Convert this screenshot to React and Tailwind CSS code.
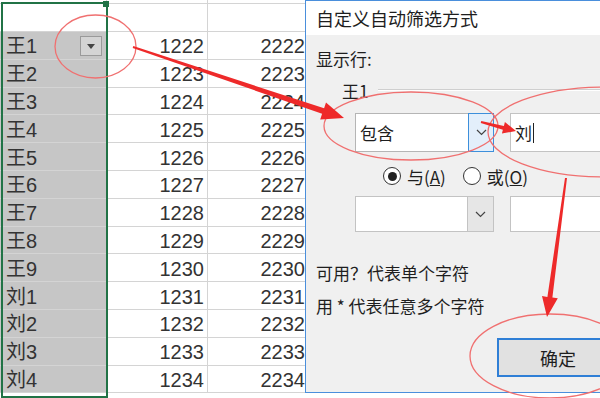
import React from 'react';

const rows = [
  ['', '', ''],
  ['王1', '1222', '2222'],
  ['王2', '1223', '2223'],
  ['王3', '1224', '2224'],
  ['王4', '1225', '2225'],
  ['王5', '1226', '2226'],
  ['王6', '1227', '2227'],
  ['王7', '1228', '2228'],
  ['王8', '1229', '2229'],
  ['王9', '1230', '2230'],
  ['刘1', '1231', '2231'],
  ['刘2', '1232', '2232'],
  ['刘3', '1233', '2233'],
  ['刘4', '1234', '2234'],
];

const Chevron = () => (
  <svg width="11" height="7" viewBox="0 0 11 7">
    <path d="M1 1 L5.5 5.5 L10 1" fill="none" stroke="#444" strokeWidth="1.2" />
  </svg>
);

const Radio = ({ checked }) => (
  <span className="w-[18px] h-[18px] rounded-full border border-[#333] bg-white flex items-center justify-center">
    {checked && <span className="w-[9px] h-[9px] rounded-full bg-[#222]" />}
  </span>
);

const Sheet = () => (
  <div className="flex flex-col w-[600px]" style={{ fontFamily: '"Liberation Sans", "Noto Sans CJK SC", sans-serif' }}>
    <div className="h-[4px] border-b border-[#d4d4d4] flex">
      <div className="w-[107px] border-r border-[#d4d4d4]" />
      <div className="w-[101px] border-r border-[#d4d4d4]" />
    </div>
    {rows.map((r, i) => (
      <div key={i} className={`flex border-b border-[#d4d4d4] text-[20px] text-[#333] ${i === 0 ? 'h-[28px]' : 'h-[27.8px]'}`}>
        <div className={`w-[107px] flex items-center pl-[6px] pt-[2px] border-r border-[#d4d4d4] ${i === 0 ? 'bg-white' : 'bg-[#c6c6c6]'}`}>
          <span className="leading-none">{r[0]}</span>
          {i === 1 && (
            <span className="ml-auto mr-[4px] w-[22px] h-[20px] border border-[#9a9a9a] bg-[#d4d4d4] flex items-center justify-center">
              <svg width="8" height="5" viewBox="0 0 8 5"><path d="M0 0 L8 0 L4 5 Z" fill="#444" /></svg>
            </span>
          )}
        </div>
        <div className="w-[101px] flex items-center justify-end pr-[3px] pt-[2px] border-r border-[#d4d4d4] leading-none">{r[1]}</div>
        <div className="w-[100px] flex items-center justify-end pr-[3px] pt-[2px] leading-none">{r[2]}</div>
      </div>
    ))}
  </div>
);

const Dialog = () => (
  <div
    className="absolute left-[305px] top-0 w-[300px] h-[393px] border border-[#4a8fdc] bg-[#f0f0f0] flex flex-col text-[#1e1e1e]"
    style={{ fontFamily: '"Noto Sans CJK SC", sans-serif' }}
  >
    <div className="h-[34px] bg-white flex items-center pl-[10px] text-[18px] leading-none">自定义自动筛选方式</div>
    <div className="flex flex-col pl-[10px] text-[17px]">
      <div className="mt-[13px] h-[22px] leading-[22px]">显示行:</div>
      <div className="mt-[10px] h-[20px] flex items-center pl-[26px]">
        <span className="leading-none">王1</span>
        <div className="flex-1 ml-[10px] flex flex-col">
          <div className="h-px bg-[#cfcfcf]" />
          <div className="h-px bg-white" />
        </div>
      </div>
      <div className="mt-[13px] flex pl-[39px] gap-[16px]">
        <div className="w-[139px] h-[39px] border border-[#b5b5b5] bg-white flex">
          <span className="flex-1 flex items-center pl-[4px] leading-none">包含</span>
          <span className="w-[26px] -my-px -mr-px border border-[#3d8fdb] bg-[#e3effb] flex items-center justify-center">
            <Chevron />
          </span>
        </div>
        <div className="flex-1 h-[39px] border border-[#c3c3c3] bg-white flex items-center pl-[4px]">
          <span className="leading-none">刘</span>
          <span className="w-px h-[20px] bg-[#222] ml-px" />
        </div>
      </div>
      <div className="mt-[14px] h-[20px] flex items-center pl-[67px]">
        <Radio checked />
        <span className="ml-[6px] leading-none">与(<span className="underline">A</span>)</span>
        <span className="ml-[17px]"><Radio /></span>
        <span className="ml-[6px] leading-none">或(<span className="underline">O</span>)</span>
      </div>
      <div className="mt-[10px] flex pl-[39px] gap-[16px]">
        <div className="w-[139px] h-[36px] border border-[#c3c3c3] bg-white flex">
          <span className="flex-1" />
          <span className="w-[26px] border-l border-[#c3c3c3] bg-[#e6e6e6] flex items-center justify-center">
            <Chevron />
          </span>
        </div>
        <div className="flex-1 h-[36px] border border-[#c3c3c3] bg-white" />
      </div>
      <div className="mt-[31px] h-[20px] leading-[20px]">可用？代表单个字符</div>
      <div className="mt-[13px] h-[20px] leading-[20px]">用 * 代表任意多个字符</div>
      <div className="mt-[22px] ml-[181px] w-[120px] h-[39px] border-2 border-[#2f7fd6] bg-[#e1e1e1] flex items-center pl-[41px] text-[18px] leading-none">
        确定
      </div>
    </div>
  </div>
);

const Marks = () => (
  <svg className="absolute inset-0 pointer-events-none" width="600" height="398" viewBox="0 0 600 398">
    <g fill="none" stroke="#f07070" strokeWidth="1.3">
      <ellipse cx="95.5" cy="46.5" rx="40.5" ry="31.5" />
      <ellipse cx="411" cy="126" rx="87" ry="34" />
      <ellipse cx="605" cy="132" rx="117" ry="45" />
      <ellipse cx="550" cy="356" rx="80" ry="42" />
    </g>
    <g fill="#ee2a2a">
      <polygon points="133.3,46.1 324.1,108.2 326,102.5 344,118 320.2,119.5 322.1,113.8 132.7,48" />
      <polygon points="481.25,121 503.9,125.9 504.9,122 516,131 501.9,133.6 502.9,129.7 480.75,123" />
      <polygon points="567,178.1 552.4,297.5 557.8,298.3 547,317 542,296.1 547.4,296.9 565,177.9" />
    </g>
  </svg>
);

export default function App() {
  return (
    <div className="relative w-[600px] h-[398px] overflow-hidden bg-white">
      <Sheet />
      <div className="absolute left-[1px] top-[2px] w-[107px] bottom-0 border-2 border-[#217346]" />
      <div className="absolute left-[103px] top-[1px] w-[6px] h-[6px] bg-[#217346]" />
      <Dialog />
      <Marks />
    </div>
  );
}
